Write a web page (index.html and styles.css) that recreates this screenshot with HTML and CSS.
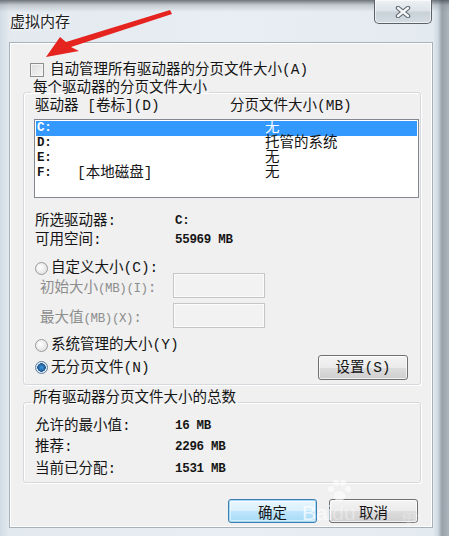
FILE: index.html
```html
<!DOCTYPE html>
<html lang="zh-CN">
<head>
    <meta charset="UTF-8">
    <meta name="viewport" content="width=device-width, initial-scale=1.0">
    <title>虚拟内存</title>
    <link rel="stylesheet" href="styles.css">
</head>
<body>
    <div class="window">
        <div class="titlebar">
            <span class="title">虚拟内存</span>
            <button class="close" aria-label="关闭">
                <svg width="18" height="12" viewBox="0 0 18 12">
                    <path d="M4 2 L14 10 M14 2 L4 10" stroke="#5d6670" stroke-width="4.5" stroke-linecap="round"/>
                    <path d="M4 2 L14 10 M14 2 L4 10" stroke="#f4f6f8" stroke-width="2.4" stroke-linecap="round"/>
                </svg>
            </button>
        </div>

        <div class="client">
            <label class="auto"><span class="check"></span>自动管理所有驱动器的分页文件大小(A)</label>

            <fieldset class="group drives">
                <legend>每个驱动器的分页文件大小</legend>
                <div class="list-head">
                    <span class="head-drive">驱动器 [卷标](D)</span>
                    <span>分页文件大小(MB)</span>
                </div>
                <div class="listbox">
                    <div class="row selected"><span class="val">C:</span><span></span><span>无</span></div>
                    <div class="row"><span class="val">D:</span><span></span><span>托管的系统</span></div>
                    <div class="row"><span class="val">E:</span><span></span><span>无</span></div>
                    <div class="row"><span class="val">F:</span><span>[本地磁盘]</span><span>无</span></div>
                </div>

                <div class="info">
                    <span>所选驱动器:</span><span class="val">C:</span>
                    <span>可用空间:</span><span class="val">55969 MB</span>
                </div>

                <div class="radio-row custom"><span class="radio"></span>自定义大小(C):</div>
                <div class="field-row first"><span class="field-label">初始大小<span class="lat">(MB)(I)</span>:</span><span class="textbox"></span></div>
                <div class="field-row"><span class="field-label">最大值<span class="lat">(MB)(X)</span>:</span><span class="textbox"></span></div>
                <div class="radio-row system"><span class="radio"></span>系统管理的大小(Y)</div>
                <div class="radio-row none"><span class="radio on"></span>无分页文件(N)<button class="btn set">设置(S)</button></div>
            </fieldset>

            <fieldset class="group totals">
                <legend>所有驱动器分页文件大小的总数</legend>
                <div class="info sums">
                    <span>允许的最小值:</span><span class="val">16 MB</span>
                    <span>推荐:</span><span class="val">2296 MB</span>
                    <span>当前已分配:</span><span class="val">1531 MB</span>
                </div>
            </fieldset>

            <div class="actions">
                <button class="btn default">确定</button>
                <button class="btn">取消</button>
            </div>
        </div>
    </div>

    <!-- annotation arrow drawn over the dialog -->
    <svg class="arrow" width="200" height="70" viewBox="0 0 200 70">
        <polygon points="46,57 60,37 66,42 170,10 172,14 71,47 79,51" fill="#e5231f"/>
    </svg>

    <div class="watermark">
        <svg class="paw" width="26" height="24" viewBox="0 0 26 24">
            <circle cx="5" cy="10" r="3" fill="#fff"/>
            <circle cx="10" cy="4" r="3" fill="#fff"/>
            <circle cx="17" cy="4" r="3" fill="#fff"/>
            <circle cx="22" cy="10" r="3" fill="#fff"/>
            <ellipse cx="13.5" cy="17" rx="6" ry="5" fill="#fff"/>
        </svg>
        <span>Bai</span><span class="du">du</span><span class="jy">经验</span>
    </div>
</body>
</html>
```

FILE: styles.css
```css
* {
    margin: 0;
    padding: 0;
    box-sizing: border-box;
}

body {
    font-family: "Liberation Mono", "Noto Sans CJK SC", monospace;
    font-size: 14.5px;
    color: #151515;
    overflow: hidden;
}

.window {
    position: relative;
    width: 449px;
    height: 536px;
    background:
        linear-gradient(to bottom, rgba(70, 76, 82, 0.75) 0, rgba(130, 138, 146, 0.35) 5px, rgba(255, 255, 255, 0) 12px),
        linear-gradient(to right, #d2dce4 0, #e2e9ef 9px, #e8eef3 50%, #e4ebf0 433px, #cdd8e0 438px, #98a1a9 442px, #aeb7be 449px);
}

.titlebar {
    display: flex;
    justify-content: space-between;
    align-items: flex-start;
    height: 42px;
}

.title {
    margin: 13px 0 0 10px;
    line-height: 16px;
    font-family: "Noto Sans CJK SC", sans-serif;
    font-size: 15px;
    color: #1e1e1e;
    text-shadow: 0 0 6px #ffffff, 0 0 3px #ffffff;
}

.close {
    display: flex;
    justify-content: center;
    align-items: center;
    width: 58px;
    height: 24px;
    margin-right: 17px;
    border: 1px solid #5b6168;
    border-top: none;
    border-radius: 0 0 5px 5px;
    background: linear-gradient(to bottom, #eef1f4 0, #dde3e9 45%, #c9d1d9 55%, #d5dce3 100%);
    box-shadow: inset 0 0 0 1px rgba(255, 255, 255, 0.6);
}

.client {
    width: 424px;
    height: 486px;
    margin-left: 9px;
    background: #f0f0f0;
    border: 1px solid #a9b1b8;
    box-shadow: inset 0 0 0 1px #ffffff;
}

/* checkbox */
.auto {
    display: flex;
    align-items: center;
    height: 16px;
    margin: 19px 0 0 20px;
    line-height: 16px;
}

.check {
    width: 14px;
    height: 14px;
    margin-right: 6px;
    border: 1px solid #8f8f8f;
    background: linear-gradient(135deg, #dcdcdc, #f6f6f6);
    box-shadow: inset 0 0 0 1px #f4f4f4;
}

/* group boxes */
.group {
    width: 398px;
    margin-left: 13px;
    border: 1px solid #d5d9dd;
    border-radius: 3px;
    box-shadow: inset 1px 1px 0 #ffffff, 1px 1px 0 #ffffff;
    min-width: 0;
}

.group legend {
    margin-left: 7px;
    padding: 0 2px 8px;
    line-height: 16px;
}

.drives {
    margin-top: 2px;
    padding-bottom: 4px;
}

.totals {
    margin-top: 5px;
    padding-bottom: 2px;
}

.list-head {
    display: flex;
    margin-top: -6px;
    padding-left: 11px;
    line-height: 16px;
}

.head-drive {
    width: 195px;
}

.listbox {
    width: 385px;
    height: 79px;
    margin: 5px 0 0 10px;
    padding-top: 1px;
    border: 1px solid #828790;
    background: #ffffff;
}

.row {
    display: grid;
    grid-template-columns: 40px 188px 1fr;
    height: 15px;
    margin: 0 1px;
    padding-left: 1px;
    line-height: 15px;
}

.row.selected {
    background: #3399ff;
    color: #ffffff;
}

.val {
    font-family: "Liberation Mono", monospace;
    font-size: 12.5px;
    font-weight: bold;
    letter-spacing: -0.3px;
}

.lat {
    font-size: 12.5px;
    letter-spacing: -0.4px;
}

.info {
    display: grid;
    grid-template-columns: 140px auto;
    margin: 14px 0 0 11px;
    line-height: 19px;
}

.sums {
    margin-top: 1.5px;
    line-height: 21.5px;
}

/* radio buttons */
.radio-row {
    display: flex;
    align-items: center;
    margin-left: 11px;
    line-height: 16px;
}

.radio-row.custom {
    height: 16px;
    margin-top: 10px;
}

.radio-row.system {
    height: 18px;
    margin-top: 8px;
}

.radio-row.none {
    height: 25px;
    margin-top: 1px;
}

.radio {
    width: 13px;
    height: 13px;
    margin-right: 3px;
    border: 1px solid #9a9a9a;
    border-radius: 50%;
    background: radial-gradient(circle at 40% 40%, #ffffff 0, #e4e4e4 70%, #d0d0d0 100%);
}

.radio.on {
    border-color: #5a7fa3;
    background: radial-gradient(circle, #3a9ae0 0, #2468a8 3px, #1d4f86 4px, #e8eef3 4.5px, #d4dbe2 100%);
}

.field-row {
    display: flex;
    align-items: center;
    height: 25px;
    margin-top: 5px;
    padding-left: 16px;
    color: #8d8d8d;
}

.field-row.first {
    margin-top: -3px;
}

.field-label {
    width: 133px;
}

.textbox {
    width: 92px;
    height: 25px;
    border: 1px solid #c6c6c6;
    background: #f2f2f2;
    box-shadow: inset 0 0 0 1px #fbfbfb;
}

/* push buttons */
.btn {
    height: 24px;
    font: inherit;
    color: #151515;
    border: 1px solid #707070;
    border-radius: 3px;
    background: linear-gradient(to bottom, #f4f4f4 0, #ebebeb 50%, #dddddd 51%, #cfcfcf 100%);
    box-shadow: inset 0 0 0 1px rgba(255, 255, 255, 0.7);
}

.btn.set {
    width: 90px;
    height: 25px;
    margin: 0 12px 0 auto;
}

.btn.default {
    border-color: #3c7fb1;
    background: linear-gradient(to bottom, #eaf6fd 0, #d9f0fc 50%, #bee6fd 51%, #a7d9f5 100%);
    box-shadow: inset 0 0 0 1px #a2d7f5, inset 0 0 0 2px rgba(255, 255, 255, 0.5);
}

.actions {
    display: flex;
    justify-content: flex-end;
    gap: 12px;
    margin: 16px 14px 0 0;
}

.actions .btn {
    width: 89px;
}

.arrow {
    position: absolute;
    top: 0;
    left: 0;
}

.watermark {
    position: absolute;
    top: 479px;
    left: 302px;
    display: flex;
    align-items: flex-end;
    width: 120px;
    height: 46px;
    font-family: "Liberation Sans", sans-serif;
    font-size: 21px;
    color: rgba(255, 255, 255, 0.7);
    pointer-events: none;
}

.paw {
    position: absolute;
    top: 0;
    left: 24px;
    opacity: 0.6;
}

.watermark .du {
    color: rgba(255, 255, 255, 0.35);
}

.watermark .jy {
    margin-left: auto;
    font-family: "Noto Sans CJK SC", sans-serif;
    font-size: 10px;
    line-height: 14px;
    color: rgba(255, 255, 255, 0.35);
}
```
